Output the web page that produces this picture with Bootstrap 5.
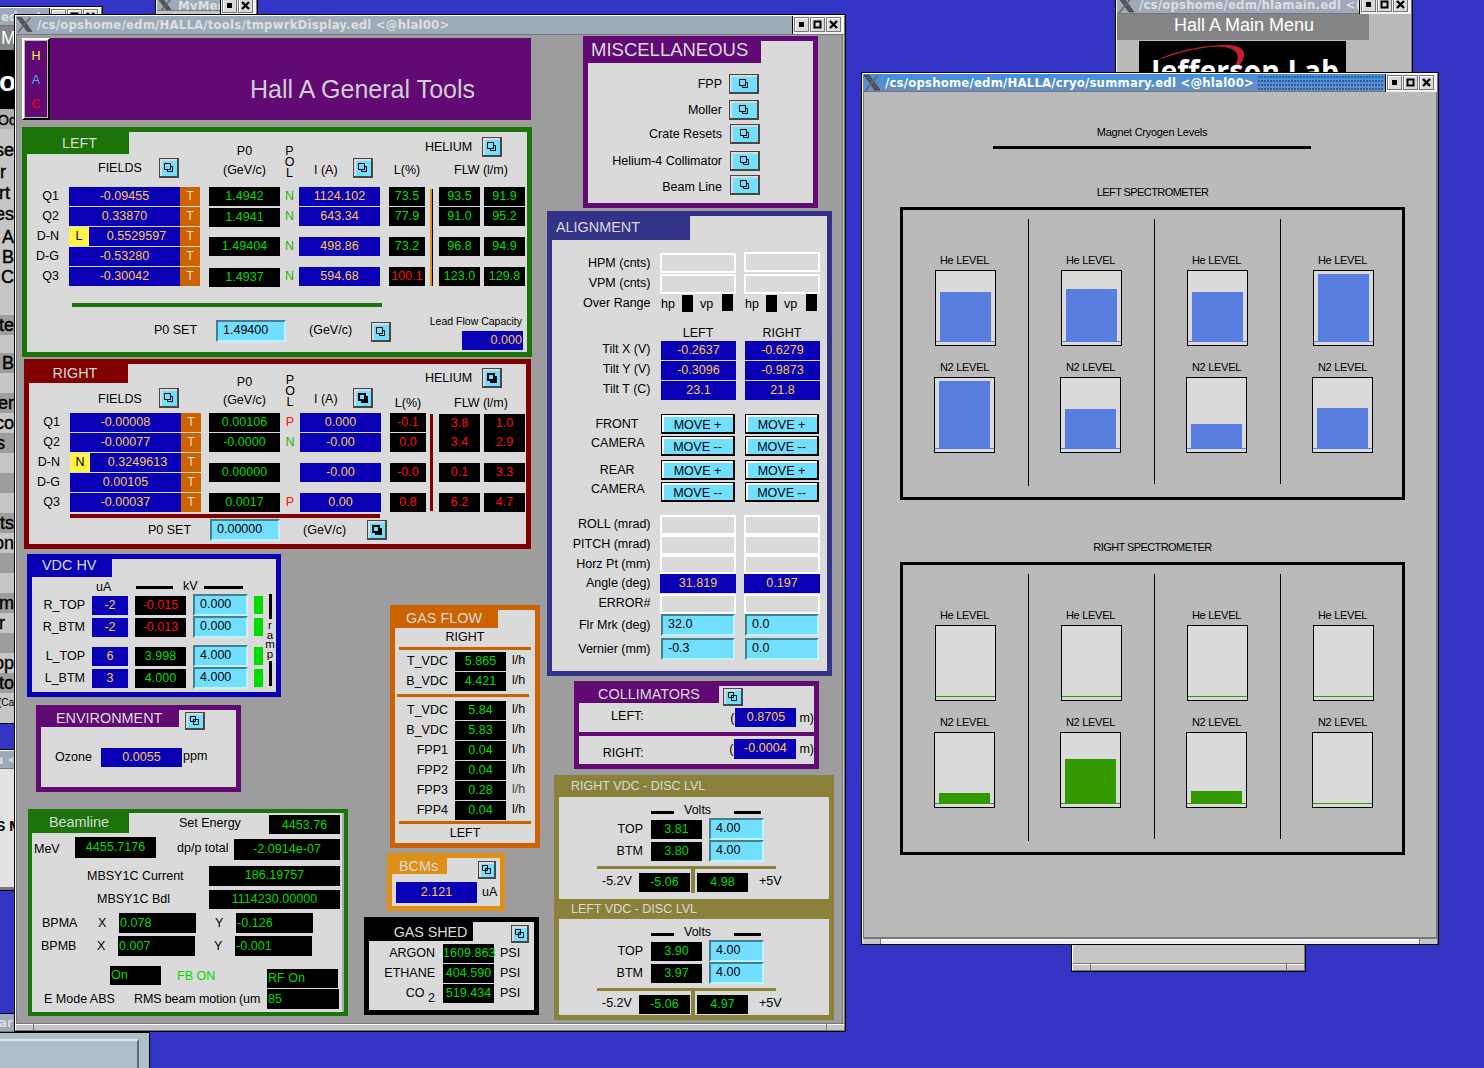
<!DOCTYPE html>
<html lang="en">
<head>
<meta charset="utf-8">
<title>Hall A General Tools</title>
<link rel="stylesheet" href="https://cdn.jsdelivr.net/npm/bootstrap@5.3.0/dist/css/bootstrap.min.css">
<script src="https://cdn.jsdelivr.net/npm/bootstrap@5.3.0/dist/js/bootstrap.bundle.min.js"></script>
<style>
body{background:#3333c4;color:#000;font:12.5px/20px "Liberation Sans",Arial,sans-serif;white-space:nowrap;width:1484px;height:1068px}
/* desktop windows */
.desk{width:1484px;height:1068px}
.win{position:absolute;background:#c6c6c6;border:1px solid #000;overflow:hidden}
.winframe{border:1px solid;border-color:#fff #777 #777 #fff;height:100%}
.tbar{height:18px;background:#9daaba;color:#dedede;font:bold 13px/17px "DejaVu Sans Condensed","DejaVu Sans",sans-serif;font-stretch:condensed;letter-spacing:.2px;border-bottom:1px solid #777;flex:none}
.tbar svg{flex:none}
.tbtns{background:#f2f2f2;height:18px;border-left:1px solid #000;padding:1px 3px 0 1px;gap:1px}
.tb{width:15px;height:15px;border:1px solid #777;background:#dadada;box-shadow:inset 1px 1px #fff;flex:none;display:block}
.handle{height:7px;border-top:1px solid #777;background:#c6c6c6;box-shadow:inset 0 1px #fff;flex:none}
.handle i{display:block;width:18px;height:7px}
.handle i:first-child{border-right:1px solid #777}.handle i:last-child{border-left:1px solid #777}
.w-sum .handle{background:#eee}.w-sum .handle i{background:#c6c6c6}
.w-main{left:14px;top:14px;width:832px;height:1018px}
.w-main .tbar{height:19px}
.w-main .surface{background:#9d9d9d;border:1px solid #777;border-width:0 1px 0 1px;margin:0 1px 0 0;height:988px}
.w-my{left:155px;top:-17px;width:103px;height:50px}
.w-left{left:-90px;top:6px;width:193px;height:718px}
.w-left2{left:-90px;top:749px;width:150px;height:142px}
.w-left3{left:-90px;top:1013px;width:150px;height:30px}
.w-low{left:-20px;top:1032px;width:170px;height:60px;background:#adc0c9}
.w-low .inset-box{margin:6px 10px 0 0;height:60px;border:2px solid;border-color:#dfe9ec #667 #667 #dfe9ec}
.w-hla{left:1115px;top:-6px;width:298px;height:90px}
.w-sum{left:861px;top:72px;width:578px;height:873px}
.w-bot{left:1071px;top:930px;width:235px;height:42px}
/* slivers of the menu behind */
.sliv{padding-left:80px;width:104px;font-size:18px;text-align:right;-webkit-text-stroke:.4px #000}
.sliv div{height:20px;line-height:20px}
.sliv .dk{background:#9d9d9d}
/* panels */
.pn{border:5px solid var(--c);background:#dadada;flex:none}
.tabt{background:var(--c);color:#dadada;font-size:14.4px;flex:none;overflow:visible}
.rd{height:19px;line-height:19px;margin-bottom:1px;text-align:center;flex:none;letter-spacing:.05px}
.bl{background:#0900b6;color:#ffc94a}
.bk{background:#000;color:#00dc00}
.rr{color:#ff0f0f}
.og{background:#cd6200;color:#e8d8c8}
.inp{background:#73dfff;border:2px solid;border-color:#437f8e #bdf2ff #bdf2ff #437f8e;height:22px;line-height:16px;padding-left:5px;flex:none}
.ib{width:20px;height:20px;background:#73dfff;border:1px solid #474747;border-right-width:2px;border-bottom-width:2px;box-shadow:inset 2px 2px #dadada;padding:0;flex:none;display:flex;align-items:center;justify-content:center}
.ib svg{display:block}
.ib.wide{width:30px}
.ib.s18{width:18px;height:18px}
.lb{flex:none}
.mid{margin:11px 0}
/* header */
.hdr{width:509px;height:82px;background:#610a73;margin:3px 0 7px 5px}
.hac{width:28px;height:82px;border:2px solid;border-color:#fff #000 #000 #fff;box-shadow:inset -1px -1px #bba,inset 1px 1px #bba;text-align:center;padding-top:3px}
.hdr-t{font-size:25px;color:#cfcfcf;margin:36px 0 0 200px;line-height:30px;letter-spacing:.02px}
/* spectrometer panels */
.p-left{--c:#1c730a;width:510px;height:230px;margin-left:5px}
.p-right{--c:#800000;width:507px;height:190px;margin:2px 0 5px 7px}
.cF{width:173px}.cF .fl{height:33px;padding:4px 0 0 71px}
.cF .fl .lb{width:61px}
.frow{display:flex;height:20px}
.frow .lb{width:32px;text-align:right;margin-right:10px;line-height:19px}
.p-right .frow .lb{width:31px}
.frow .bl{width:111px}.frow .og{width:20px}
.flag{background:#fff34a;color:#000;width:20px;height:19px;line-height:19px;text-align:center}
.frow .flag+.bl{width:91px;padding-left:4px}
.cP{width:71px;margin-left:9px;text-align:center}
.cO{width:20px;text-align:center}
.cO .pol{line-height:11px}
.pn-n{color:#20b800}
.cI{width:81px}
.cH{margin-left:8px}
.p-left .cO{width:19px}.p-left .cH{margin-left:9px}
.cL{width:36px;text-align:center}
.cB{width:3px;margin:2px 6px 0 5px;height:97px}
.cQ{width:41px;margin-right:4px}
.stem{height:4px;width:310px;background:var(--c)}
/* vdc hv */
.p-hv{--c:#0900b6;width:254px;height:143px;margin:0 0 8px 10px}
.hvrow{display:flex;height:22px}
.hvrow .lb{width:53px;text-align:right;margin-right:7px;line-height:22px}
.hvrow .rd{margin-top:2px}
.hvrow .bl{width:36px;margin-right:7px}.hvrow .bk{width:51px;margin-right:7px}
.hvrow .inp{width:55px;margin-right:6px}
.led{width:9px;height:18px;background:#00dc00;margin-top:2px}
.bar3{height:3px;background:#000}
.rampb{width:3px;height:25px;background:#000;margin:0 auto}
.ramp{width:12px;font-size:11.5px;line-height:9.6px;text-align:center}
/* environment, beamline */
.p-env{--c:#610a73;width:205px;height:87px;margin:0 0 17px 19px}
.p-bm{--c:#1c730a;width:320px;height:207px;border-width:4px;margin-left:11px;box-shadow:inset -2px 0 #aaa}
.bmr{display:flex}
.bmr .rd{margin:0;height:20px;line-height:20px}
.lt{text-align:left;padding-left:1px}
/* gas */
.p-gas{--c:#cd6200;width:150px;height:243px;margin-bottom:5px;margin-left:3px}
.grow{display:flex;height:20px}
.grow .lb{width:53px;text-align:right;margin-right:7px;line-height:19px}
.grow .bk{width:51px;margin-right:6px}
.grow .u{line-height:17px}
.grow.shed .lb{width:66px;margin-right:8px;line-height:18px}.grow.shed .u{line-height:18px}
.grow .lb .low2{vertical-align:-5px;line-height:1}
.gl{height:3px;width:132px;background:var(--c)}
.p-bcm{--c:#e08f16;width:118px;height:58px;margin-bottom:6px}
.p-shed{--c:#000;width:175px;height:98px;margin-left:-23px}
.colG{width:153px;margin:51px 0 0 39px}
/* right column */
.p-misc{--c:#610a73;width:235px;height:172px;margin:1px 0 3px 36px}
.mrow{display:flex}.mrow .lb{width:134px;text-align:right;margin-right:7px}
.p-al{--c:#333388;width:285px;height:465px;margin-bottom:5px}
.al-l{width:98.5px;text-align:right}
.al-c{width:76px;margin-left:8px}
.al-c .rd{margin-left:1px}
.ebox{height:20px;border:2px solid #fff}
.sq{width:11px;height:17px;background:#000}
.mv{display:block;width:74px;height:20px;margin-left:1px;padding:0;border:1px solid #000;border-width:1px 2px 2px 1px;background:#73dfff;box-shadow:inset 2px 2px #fff;text-align:center;line-height:20px;font-size:12.5px;margin-bottom:2px}
.al-c .inp{width:74px;margin-left:1px}
.p-col{--c:#610a73;width:245px;height:88px;margin:0 0 6px 27px}
.p-disc{--c:#8a823a;width:280px;height:245px;margin-left:7px;background:var(--c);border:0;padding:0 5px}
.dt{color:#dadada;line-height:20px;padding-left:12px}
.dbody{background:#dadada}
.drow{display:flex;height:22px}
.drow .lb{width:84px;text-align:right;margin-right:8px;line-height:22px}
.drow .bk{width:51px;margin:2px 7px 0 0}.drow .inp{width:55px}
.olive{height:3px;width:179px;background:var(--c);margin:4px 0 0 38px}
/* cryo summary */
.cryo{background:#bababa;font-size:11px;letter-spacing:-.28px;height:846px;border:1px solid #777;border-top:0}
.spt{letter-spacing:-.58px}
.spec{width:505px;height:293px;border:3px solid #000;margin-left:36px}
.quad{width:125px;padding:40px 0 0 31px;flex:none}
.vline{width:1px;height:265px;background:#000;margin-top:9px;flex:none}
.tank{width:61px;height:76px;border:1px solid #000;background:#dadada;padding-bottom:3px;display:flex;flex-direction:column;justify-content:flex-end}
.tank.he{margin:0 0 11px 1px}
.tank .lv{width:51px;background:var(--f);margin:0 auto}
.tank .base{height:1px;background:var(--f)}
.tl{line-height:20px;height:20px;text-align:center;width:61px}
.s-blue{--f:#597ee0}.s-green{--f:#339900}
</style>
</head>
<body>
<svg width="0" height="0" class="position-absolute">
<symbol id="xl" viewBox="0 0 18 18"><path d="M1 1h5l11 15h-5z" fill="#555" stroke="#333" stroke-width=".6"/><path d="M15 1 2 17" stroke="#666" stroke-width="1.6"/></symbol>
<symbol id="ov" viewBox="0 0 10 10"><path d="M3.5 3.5h5v5h-5z" fill="none" stroke="#000"/><path d="M.5.5h6v6h-6z" fill="#73dfff" stroke="#000"/></symbol>
<symbol id="ox" viewBox="0 0 10 10"><path d="M3.5 3.5h5v5h-5z" fill="none" stroke="#000"/><path d="M.5.5h5v5h-5z" fill="none" stroke="#000"/></symbol>
<symbol id="of" viewBox="0 0 10 10"><path d="M3 3h7v7h-7z" fill="#000"/><path d="M1 1h6v6h-6z" fill="#73dfff" stroke="#000" stroke-width="2"/></symbol>
<symbol id="bd" viewBox="0 0 13 13"><path d="M4 4h5v5h-5z"/></symbol>
<symbol id="bq" viewBox="0 0 13 13"><path d="M3.5 3.5h6v6h-6z" fill="none" stroke="#000" stroke-width="2"/></symbol>
<symbol id="bx" viewBox="0 0 13 13"><path d="M3 3l7 7M10 3l-7 7" stroke="#000" stroke-width="2.4"/></symbol>
</svg>
<div class="desk position-relative overflow-hidden">

<!-- menu windows behind -->
<div class="win w-left"><div class="winframe">
 <div class="tbar d-flex justify-content-between"><span style="padding-left:89px">edm_t</span><span class="tbtns d-flex"><svg class="tb"><use href="#bd"/></svg><svg class="tb"><use href="#bq"/></svg><svg class="tb"><use href="#bx"/></svg></span></div>
 <div class="sliv">
  <div class="text-white" style="height:24px;line-height:24px;background:#858585;-webkit-text-stroke:0">M</div>
  <div class="text-white fw-bold fs-3" style="height:59px;line-height:64px;background:#000;-webkit-text-stroke:0">o</div>
  <div style="background:#b0b0b0;font-size:14px;line-height:22px">Oc</div>
 </div>
</div></div>
<div class="win" style="left:-90px;top:132px;width:104px;height:591px;border:0"><div class="sliv">
 <div style="height:8px"></div><div style="height:22px">se</div><div style="height:21px;padding-right:8px">r</div><div style="height:21px;padding-right:4px">rt</div><div style="height:23px">es</div>
 <div>A</div><div>B</div><div>C</div><div style="height:28px"></div>
 <div class="dk">te</div><div style="height:18px"></div><div class="dk">B</div><div></div><div class="dk">er</div><div>co</div><div class="dk" style="padding-right:9px">s</div><div></div><div class="dk"></div><div></div>
 <div class="dk">ts</div><div>on</div><div class="dk"></div><div></div><div class="dk">m</div><div style="padding-right:9px">r</div><div class="dk"></div><div>op</div><div class="dk">to</div>
 <div style="font-size:10px;-webkit-text-stroke:0">(Ca</div>
</div></div>
<div class="win w-left2"><div class="winframe" style="background:#e2e2e2"><div class="tbar" style="padding-left:83px">u &lt;</div><div style="padding:47px 0 0 84px;font-size:14px" class="fw-bold">S M</div><div style="height:53px;border-bottom:2px solid #777"></div></div></div>
<div class="win w-left3"><div class="tbar" style="padding-left:88px">ar</div></div>
<div class="win w-low"><div class="inset-box"></div></div>
<div class="win w-my"><div class="winframe"><div class="tbar d-flex justify-content-between mt-2 pt-1"><span class="d-flex overflow-hidden"><svg width="17" height="18"><use href="#xl"/></svg><span class="ps-1">MyMer</span></span><span class="tbtns d-flex"><svg class="tb"><use href="#bd"/></svg><svg class="tb"><use href="#bx"/></svg></span></div></div></div>

<div class="win w-hla"><div class="winframe" style="background:#bababa">
 <div class="tbar d-flex justify-content-between"><span class="d-flex overflow-hidden"><svg width="18" height="18"><use href="#xl"/></svg><span class="ps-1">/cs/opshome/edm/hlamain.edl &lt;(</span></span><span class="tbtns d-flex"><svg class="tb"><use href="#bd"/></svg><svg class="tb"><use href="#bq"/></svg><svg class="tb"><use href="#bx"/></svg></span></div>
 <div class="text-white text-center" style="width:252px;height:26px;background:#858585;font-size:18px;line-height:22px;padding-left:2px">Hall A Main Menu</div>
 <svg width="207" height="45" style="display:block;margin:1px 0 0 22px;background:#000"><path d="M18 19C40 8 70 4 88 4c24 0 20 16 5 28l-8 5c14-12 22-28 0-31-20-2-45 6-67 13z" fill="#c0202e"/><text x="12" y="41" fill="#fff" font-family="Open Sans,Noto Sans,sans-serif" font-size="30" font-weight="700" textLength="188" lengthAdjust="spacingAndGlyphs">Jefferson Lab</text></svg>
</div></div>
<div class="win w-bot"><div class="winframe d-flex flex-column justify-content-end"><div class="handle d-flex justify-content-between"><i></i><i></i></div></div></div>

<!-- general tools -->
<div class="win w-main"><div class="winframe">
<div class="tbar d-flex justify-content-between"><span class="d-flex"><svg width="17" height="18"><use href="#xl"/></svg><span class="ps-1">/cs/opshome/edm/HALLA/tools/tmpwrkDisplay.edl &lt;@hlal00&gt;</span></span><span class="tbtns d-flex"><svg class="tb"><use href="#bd"/></svg><svg class="tb"><use href="#bq"/></svg><svg class="tb"><use href="#bx"/></svg></span></div>
<div class="surface d-flex">
<div style="width:530px">
 <div class="hdr d-flex"><div class="hac"><div style="color:#fff34a;line-height:27px">H</div><div style="color:#4fa8ff;line-height:21px">A</div><div style="color:#f00;line-height:27px">C</div></div><div class="hdr-t">Hall A General Tools</div></div>

 <div class="pn p-left">
  <div class="d-flex">
   <div class="cF"><div class="tabt text-center" style="width:102px;height:22px;line-height:22px;padding-left:3px">LEFT</div>
    <div class="fl d-flex"><span class="lb">FIELDS</span><span class="ib"><svg width="10" height="10"><use href="#ov"/></svg></span></div>
    <div class="frow"><span class="lb">Q1</span><span class="rd bl">-0.09455</span><span class="rd og">T</span></div>
    <div class="frow"><span class="lb">Q2</span><span class="rd bl">0.33870</span><span class="rd og">T</span></div>
    <div class="frow"><span class="lb">D-N</span><span class="flag">L</span><span class="rd bl text-center">0.5529597</span><span class="rd og">T</span></div>
    <div class="frow"><span class="lb">D-G</span><span class="rd bl">-0.53280</span><span class="rd og">T</span></div>
    <div class="frow"><span class="lb">Q3</span><span class="rd bl">-0.30042</span><span class="rd og">T</span></div>
   </div>
   <div class="cP"><div style="padding-top:10px;line-height:19px;height:55px">P0<br>(GeV/c)</div><div class="rd bk" style="margin-bottom:2px">1.4942</div><div class="rd bk" style="margin-bottom:10px">1.4941</div><div class="rd bk" style="margin-bottom:12px">1.49404</div><div class="rd bk">1.4937</div></div>
   <div class="cO"><div class="pol" style="padding-top:14px;height:55px">P<br>O<br>L</div><div class="rd pn-n">N</div><div class="rd pn-n">N</div><div class="rd pn-n mid">N</div><div class="rd pn-n">N</div></div>
   <div class="cI"><div class="d-flex" style="height:55px;padding:26px 0 0 15px"><span style="width:39px;line-height:24px">I (A)</span><span class="ib"><svg width="10" height="10"><use href="#ov"/></svg></span></div><div class="rd bl">1124.102</div><div class="rd bl">643.34</div><div class="rd bl mid">498.86</div><div class="rd bl">594.68</div></div>
   <div class="cH">
    <div class="d-flex" style="padding:5px 0 0 36px;height:27px"><span style="width:57px">HELIUM</span><span class="ib"><svg width="10" height="10"><use href="#ov"/></svg></span></div>
    <div class="d-flex" style="height:28px;line-height:22px"><span class="cL">L(%)</span><span style="padding-left:29px">FLW (l/m)</span></div>
    <div class="d-flex"><div class="cL"><div class="rd bk">73.5</div><div class="rd bk">77.9</div><div class="rd bk mid">73.2</div><div class="rd bk rr">100.1</div></div>
     <div class="cB" style="background:#e08f16;border-right:1px solid #000"></div>
     <div class="cQ"><div class="rd bk">93.5</div><div class="rd bk">91.0</div><div class="rd bk mid">96.8</div><div class="rd bk">123.0</div></div>
     <div class="cQ me-0"><div class="rd bk">91.9</div><div class="rd bk">95.2</div><div class="rd bk mid">94.9</div><div class="rd bk">129.8</div></div></div>
   </div>
  </div>
  <div class="stem" style="margin:15px 0 0 45px"></div>
  <div class="d-flex" style="padding-top:1px"><span style="width:62px;margin:12px 0 0 127px">P0 SET</span><span class="inp" style="width:70px;margin:12px 23px 0 0">1.49400</span><span style="width:62px;margin-top:12px">(GeV/c)</span><span class="ib" style="margin-top:14px"><svg width="10" height="10"><use href="#ov"/></svg></span>
   <div class="text-end" style="width:132px;padding-top:4px"><div style="font-size:10.5px;line-height:19px;padding-right:1px">Lead Flow Capacity</div><div class="rd bl text-end ms-auto" style="width:61px;padding-right:1px">0.000</div></div></div>
 </div>

 <div class="pn p-right">
  <div class="d-flex" style="height:149px">
   <div class="cF" style="width:172px"><div class="tabt text-center" style="width:99px;height:19px;line-height:19px;padding-right:7px">RIGHT</div>
    <div class="fl d-flex" style="height:30px;padding:5px 0 0 69px"><span class="lb" style="line-height:23px">FIELDS</span><span class="ib"><svg width="10" height="10"><use href="#ov"/></svg></span></div>
    <div class="frow"><span class="lb">Q1</span><span class="rd bl">-0.00008</span><span class="rd og">T</span></div>
    <div class="frow"><span class="lb">Q2</span><span class="rd bl">-0.00077</span><span class="rd og">T</span></div>
    <div class="frow"><span class="lb">D-N</span><span class="flag">N</span><span class="rd bl">0.3249613</span><span class="rd og">T</span></div>
    <div class="frow"><span class="lb">D-G</span><span class="rd bl">0.00105</span><span class="rd og">T</span></div>
    <div class="frow"><span class="lb">Q3</span><span class="rd bl">-0.00037</span><span class="rd og">T</span></div>
   </div>
   <div class="cP" style="margin-left:8px"><div style="padding-top:9px;line-height:18px;height:49px">P0<br>(GeV/c)</div><div class="rd bk">0.00106</div><div class="rd bk">-0.0000</div><div class="rd bk mid">0.00000</div><div class="rd bk">0.0017</div></div>
   <div class="cO"><div class="pol" style="padding-top:11px;height:49px">P<br>O<br>L</div><div class="rd rr">P</div><div class="rd pn-n">N</div><div class="rd mid"></div><div class="rd rr">P</div></div>
   <div class="cI"><div class="d-flex" style="height:49px;padding:24px 0 0 14px"><span style="width:39px;line-height:23px">I (A)</span><span class="ib"><svg width="10" height="10"><use href="#of"/></svg></span></div><div class="rd bl">0.000</div><div class="rd bl">-0.00</div><div class="rd bl mid">-0.00</div><div class="rd bl">0.00</div></div>
   <div class="cH" style="margin-left:9px">
    <div class="d-flex" style="padding:4px 0 0 35px;height:28px"><span style="width:57px">HELIUM</span><span class="ib"><svg width="10" height="10"><use href="#of"/></svg></span></div>
    <div class="d-flex" style="height:21px;line-height:22px"><span class="cL">L(%)</span><span style="padding-left:28px">FLW (l/m)</span></div>
    <div class="d-flex"><div class="cL"><div class="rd bk rr">-0.1</div><div class="rd bk rr">0.0</div><div class="rd bk rr mid">-0.0</div><div class="rd bk rr">0.8</div></div>
     <div class="cB" style="background:#800000;margin:1px 6px 0 4px"></div>
     <div class="cQ"><div class="rd bk rr mb-0" style="margin-top:1px">3.8</div><div class="rd bk rr mb-0">3.4</div><div class="rd bk rr mid">0.1</div><div class="rd bk rr">6.2</div></div>
     <div class="cQ me-0"><div class="rd bk rr mb-0" style="margin-top:1px">1.0</div><div class="rd bk rr mb-0">2.9</div><div class="rd bk rr mid">3.3</div><div class="rd bk rr">4.7</div></div></div>
   </div>
  </div>
  <div class="stem" style="margin:1px 0 0 41px"></div>
  <div class="d-flex"><span style="width:62px;margin:2px 0 0 119px">P0 SET</span><span class="inp" style="width:70px;margin:1px 23px 0 0">0.00000</span><span style="width:64px;margin-top:2px">(GeV/c)</span><span class="ib" style="margin-top:2px"><svg width="10" height="10"><use href="#of"/></svg></span></div>
 </div>

 <div class="d-flex">
  <div style="width:331px">
   <div class="pn p-hv d-flex">
    <div style="width:231px">
     <div class="tabt" style="width:80px;height:18px;line-height:13px;padding-left:10px">VDC HV</div>
     <div class="d-flex" style="height:17px"><span style="width:40px;margin-left:64px;line-height:21px">uA</span><span class="bar3" style="width:37px;margin:9px 10px 0 0"></span><span style="width:21px;line-height:19px">kV</span><span class="bar3" style="width:39px;margin-top:9px"></span></div>
     <div class="hvrow"><span class="lb">R_TOP</span><span class="rd bl">-2</span><span class="rd bk rr">-0.015</span><span class="inp">0.000</span><span class="led"></span></div>
     <div class="hvrow"><span class="lb">R_BTM</span><span class="rd bl">-2</span><span class="rd bk rr">-0.013</span><span class="inp">0.000</span><span class="led"></span></div>
     <div class="hvrow" style="margin-top:7px"><span class="lb">L_TOP</span><span class="rd bl">6</span><span class="rd bk">3.998</span><span class="inp">4.000</span><span class="led"></span></div>
     <div class="hvrow"><span class="lb">L_BTM</span><span class="rd bl">3</span><span class="rd bk">4.000</span><span class="inp">4.000</span><span class="led"></span></div>
    </div>
    <div class="ramp" style="margin-left:1px;padding-top:35px"><div class="rampb"></div><div style="padding:2px 0 2px">r<br>a<br>m<br>p</div><div class="rampb"></div></div>
   </div>
   <div class="pn p-env">
    <div class="d-flex"><div class="tabt" style="width:138px;height:17px;line-height:16px;padding-left:15px">ENVIRONMENT</div><span class="ib s18" style="width:20px;margin:2px 0 -4px 6px"><svg width="10" height="10"><use href="#ox"/></svg></span></div>
    <div class="d-flex" style="padding:21px 0 0 14px"><span style="width:46px;line-height:19px">Ozone</span><span class="rd bl" style="width:81px">0.0055</span><span style="padding-left:1px;line-height:17px">ppm</span></div>
   </div>
   <div class="pn p-bm">
    <div class="bmr"><div class="tabt text-center" style="width:97px;height:20px;line-height:19px;padding-right:3px">Beamline</div><span style="width:90px;margin-left:50px">Set Energy</span><span class="rd bk" style="width:71px;height:19px;margin-top:2px">4453.76</span></div>
    <div class="bmr" style="padding:3px 0 0 2px"><span style="width:41px;line-height:25px">MeV</span><span class="rd bk" style="width:81px;height:21px;margin-right:21px">4455.7176</span><span style="width:57px;line-height:23px">dp/p total</span><span class="rd bk" style="width:106px;height:21px;margin-top:2px">-2.0914e-07</span></div>
    <div class="bmr" style="padding:4px 0 0 55px"><span style="width:122px">MBSY1C Current</span><span class="rd bk" style="width:131px;line-height:18px">186.19757</span></div>
    <div class="bmr" style="padding:4px 0 0 65px"><span style="width:112px;line-height:18px">MBSY1C Bdl</span><span class="rd bk" style="width:131px;height:19px;line-height:18px">1114230.00000</span></div>
    <div class="bmr" style="padding:4px 0 0 10px"><span style="width:56px">BPMA</span><span style="width:21px">X</span><span class="rd bk lt" style="width:77px;margin-right:19px">0.078</span><span style="width:21px">Y</span><span class="rd bk lt" style="width:77px">-0.126</span></div>
    <div class="bmr" style="padding:3px 0 0 9px"><span style="width:56px">BPMB</span><span style="width:21px">X</span><span class="rd bk lt" style="width:77px;margin-right:19px">0.007</span><span style="width:21px">Y</span><span class="rd bk lt" style="width:77px">-0.001</span></div>
    <div class="bmr" style="padding:10px 0 0 78px"><span class="rd bk lt" style="width:51px;height:19px;line-height:18px;margin-right:16px">On</span><span style="width:90px;color:#00dc00">FB ON</span><span class="rd bk lt" style="width:71px;height:19px;line-height:19px;margin-top:3px">RF On</span></div>
    <div class="bmr" style="padding:1px 0 0 12px"><span style="width:90px">E Mode ABS</span><span style="width:133px;line-height:21px;letter-spacing:-.12px">RMS beam motion (um</span><span class="rd bk lt" style="width:72px">85</span></div>
   </div>
  </div>
  <div class="colG">
   <div class="pn p-gas">
    <div class="tabt" style="width:103px;height:18px;line-height:17px;padding-left:11px">GAS FLOW</div>
    <div class="text-center" style="height:19px;line-height:19px">RIGHT</div>
    <div class="gl" style="margin:0 0 2px 4px"></div>
    <div class="grow"><span class="lb">T_VDC</span><span class="rd bk">5.865</span><span class="u">l/h</span></div>
    <div class="grow"><span class="lb">B_VDC</span><span class="rd bk">4.421</span><span class="u">l/h</span></div>
    <div class="gl" style="margin:2px 0 4px 2px"></div>
    <div class="grow"><span class="lb">T_VDC</span><span class="rd bk">5.84</span><span class="u">l/h</span></div>
    <div class="grow"><span class="lb">B_VDC</span><span class="rd bk">5.83</span><span class="u">l/h</span></div>
    <div class="grow"><span class="lb">FPP1</span><span class="rd bk">0.04</span><span class="u">l/h</span></div>
    <div class="grow"><span class="lb">FPP2</span><span class="rd bk">0.04</span><span class="u">l/h</span></div>
    <div class="grow"><span class="lb">FPP3</span><span class="rd bk">0.28</span><span class="u" style="color:#444">l/h</span></div>
    <div class="grow"><span class="lb">FPP4</span><span class="rd bk">0.04</span><span class="u">l/h</span></div>
    <div class="gl ms-1"></div>
    <div class="text-center" style="line-height:18px">LEFT</div>
   </div>
   <div class="pn p-bcm">
    <div class="d-flex" style="height:24px"><div class="tabt" style="width:55px;height:16px;line-height:16px;padding-left:7px">BCMs</div><span class="ib s18" style="margin:3px 0 0 31px"><svg width="10" height="10"><use href="#ox"/></svg></span></div>
    <div class="d-flex ps-1"><span class="rd bl" style="width:81px;height:21px;line-height:20px">2.121</span><span style="padding-left:5px">uA</span></div>
   </div>
   <div class="pn p-shed">
    <div class="d-flex" style="height:22px"><div class="tabt text-center" style="width:104px;height:19px;line-height:20px;padding-left:19px;letter-spacing:-.1px">GAS SHED</div><span class="ib s18" style="margin:3px 0 0 38px"><svg width="10" height="10"><use href="#ox"/></svg></span></div>
    <div class="grow shed"><span class="lb">ARGON</span><span class="rd bk">1609.863</span><span class="u">PSI</span></div>
    <div class="grow shed"><span class="lb">ETHANE</span><span class="rd bk">404.590</span><span class="u">PSI</span></div>
    <div class="grow shed"><span class="lb">CO <span class="low2">2</span></span><span class="rd bk">519.434</span><span class="u">PSI</span></div>
   </div>
  </div>
 </div>
</div>

<div>
 <div class="pn p-misc">
  <div class="tabt" style="width:173px;height:22px;line-height:17px;font-size:18.5px;padding-left:3px">MISCELLANEOUS</div>
  <div class="mrow" style="margin-top:11px"><span class="lb">FPP</span><span class="ib wide"><svg width="10" height="10"><use href="#ov"/></svg></span></div>
  <div class="mrow" style="margin-top:6px"><span class="lb">Moller</span><span class="ib wide"><svg width="10" height="10"><use href="#ov"/></svg></span></div>
  <div class="mrow" style="margin-top:4px"><span class="lb me-2">Crate Resets</span><span class="ib wide"><svg width="10" height="10"><use href="#ov"/></svg></span></div>
  <div class="mrow" style="margin-top:7px"><span class="lb me-2">Helium-4 Collimator</span><span class="ib wide"><svg width="10" height="10"><use href="#ov"/></svg></span></div>
  <div class="mrow" style="margin-top:4px"><span class="lb me-2" style="line-height:25px">Beam Line</span><span class="ib wide"><svg width="10" height="10"><use href="#ov"/></svg></span></div>
 </div>

 <div class="pn p-al">
  <div class="tabt" style="width:138px;height:24px;line-height:22px;padding-left:4px">ALIGNMENT</div>
  <div class="d-flex" style="padding-top:13px">
   <div class="al-l"><div>HPM (cnts)</div><div>VPM (cnts)</div><div>Over Range</div><div style="height:26px"></div><div>Tilt X (V)</div><div>Tilt Y (V)</div><div>Tilt T (C)</div>
    <div style="padding:15px 12px 0 0">FRONT</div><div style="line-height:19px;padding-right:6px">CAMERA</div><div style="padding:7px 16px 0 0">REAR</div><div style="line-height:19px;padding-right:6px">CAMERA</div>
    <div style="padding-top:15px">ROLL (mrad)</div><div>PITCH (mrad)</div><div>Horz Pt (mm)</div><div style="line-height:19px">Angle (deg)</div><div>ERROR#</div><div style="padding-top:2px">Flr Mrk (deg)</div><div style="padding-top:4px">Vernier (mm)</div></div>
   <div class="al-c" style="margin-left:9.5px"><div class="ebox"></div><div class="ebox" style="margin-top:1px"></div>
    <div class="d-flex" style="height:38px"><span style="width:22px;padding-left:1px">hp</span><span class="sq" style="margin-top:1px"></span><span style="width:22px;margin-left:7px">vp</span><span class="sq"></span></div>
    <div class="text-center" style="line-height:21px;margin-top:-9px;height:18px">LEFT</div>
    <div class="rd bl">-0.2637</div><div class="rd bl">-0.3096</div><div class="rd bl" style="margin-bottom:14px">23.1</div>
    <button class="mv">MOVE +</button><button class="mv" style="margin-bottom:4px">MOVE --</button><button class="mv">MOVE +</button><button class="mv" style="margin-bottom:13px">MOVE --</button>
    <div class="ebox"></div><div class="ebox"></div><div class="ebox" style="height:19px"></div><div class="rd bl ms-0">31.819</div><div class="ebox"></div>
    <div class="inp">32.0</div><div class="inp" style="margin-top:2px">-0.3</div></div>
   <div class="al-c"><div class="ebox" style="margin-top:-1px"></div><div class="ebox" style="margin-top:2px"></div>
    <div class="d-flex" style="height:38px"><span style="width:22px;padding-left:1px">hp</span><span class="sq" style="margin-top:1px"></span><span style="width:22px;margin-left:7px">vp</span><span class="sq"></span></div>
    <div class="text-center" style="line-height:21px;margin-top:-9px;height:18px">RIGHT</div>
    <div class="rd bl">-0.6279</div><div class="rd bl">-0.9873</div><div class="rd bl" style="margin-bottom:14px">21.8</div>
    <button class="mv">MOVE +</button><button class="mv" style="margin-bottom:4px">MOVE --</button><button class="mv">MOVE +</button><button class="mv" style="margin-bottom:13px">MOVE --</button>
    <div class="ebox"></div><div class="ebox"></div><div class="ebox" style="height:19px"></div><div class="rd bl ms-0">0.197</div><div class="ebox"></div>
    <div class="inp">0.0</div><div class="inp" style="margin-top:2px">0.0</div></div>
  </div>
 </div>

 <div class="pn p-col">
  <div class="d-flex" style="height:22px"><div class="tabt text-center" style="width:140px;height:17px;line-height:16px">COLLIMATORS</div><span class="ib s18" style="width:20px;margin:2px 0 0 4px"><svg width="10" height="10"><use href="#ox"/></svg></span></div>
  <div class="d-flex" style="height:24px"><span class="text-end" style="width:65px;line-height:17px">LEFT:</span><span class="text-end" style="width:92px;padding-right:1px">(</span><span class="rd bl" style="width:61px">0.8705</span><span style="padding-left:3px">m)</span></div>
  <div style="height:4px;background:var(--c)"></div>
  <div class="d-flex" style="padding-top:3px"><span class="text-end" style="width:65px;line-height:28px">RIGHT:</span><span class="text-end" style="width:91px;padding-right:1px">(</span><span class="rd bl" style="width:62px;height:20px">-0.0004</span><span style="padding-left:3px">m)</span></div>
 </div>

 <div class="pn p-disc">
  <div class="dt" style="height:22px;line-height:23px">RIGHT VDC - DISC LVL</div>
  <div class="dbody" style="height:102px">
   <div class="d-flex" style="height:21px;padding-left:92px"><span class="bar3" style="width:23px;margin:14px 10px 0 0"></span><span style="width:50px;line-height:26px">Volts</span><span class="bar3" style="width:27px;margin-top:14px"></span></div>
   <div class="drow"><span class="lb">TOP</span><span class="rd bk">3.81</span><span class="inp">4.00</span></div>
   <div class="drow"><span class="lb">BTM</span><span class="rd bk">3.80</span><span class="inp">4.00</span></div>
   <div class="olive"></div>
   <div class="d-flex" style="height:24px;padding-left:43px"><span style="width:37px;line-height:25px">-5.2V</span><span class="rd bk" style="width:51px;margin-top:4px">-5.06</span><span style="width:4px;background:#8a823a;margin:0 2px 0 1px"></span><span class="rd bk" style="width:51px;margin-top:4px">4.98</span><span style="padding-left:11px;line-height:25px">+5V</span></div>
  </div>
  <div class="dt" style="line-height:21px;height:20px">LEFT VDC - DISC LVL</div>
  <div class="dbody" style="height:96px">
   <div class="d-flex" style="height:21px;padding-left:92px"><span class="bar3" style="width:23px;margin:14px 10px 0 0"></span><span style="width:50px;line-height:26px">Volts</span><span class="bar3" style="width:27px;margin-top:14px"></span></div>
   <div class="drow"><span class="lb">TOP</span><span class="rd bk">3.90</span><span class="inp">4.00</span></div>
   <div class="drow"><span class="lb">BTM</span><span class="rd bk">3.97</span><span class="inp">4.00</span></div>
   <div class="olive"></div>
   <div class="d-flex" style="height:24px;padding-left:43px"><span style="width:37px;line-height:25px">-5.2V</span><span class="rd bk" style="width:51px;margin-top:4px">-5.06</span><span style="width:4px;background:#8a823a;margin:0 2px 0 1px"></span><span class="rd bk" style="width:51px;margin-top:4px">4.97</span><span style="padding-left:11px;line-height:25px">+5V</span></div>
  </div>
 </div>
</div>
</div>
<div class="handle d-flex justify-content-between"><i></i><i></i></div>
</div></div>

<!-- cryo summary -->
<div class="win w-sum"><div class="winframe">
<div class="tbar d-flex text-white" style="background:linear-gradient(#3f8fe0,#6a8fbd)"><svg width="18" height="18"><use href="#xl"/></svg><span class="ps-1">/cs/opshome/edm/HALLA/cryo/summary.edl &lt;@hlal00&gt;</span><span class="flex-grow-1" style="margin:2px 1px 1px 4px;background:radial-gradient(circle at 1px 1px,#2b5fa5 .8px,transparent 1px) 0 0/3px 4px"></span><span class="tbtns d-flex"><svg class="tb"><use href="#bd"/></svg><svg class="tb"><use href="#bq"/></svg><svg class="tb"><use href="#bx"/></svg></span></div>
<div class="cryo">
 <div class="text-center" style="width:576px;padding-top:30px">Magnet Cryogen Levels</div>
 <div class="bar3" style="width:318px;margin:4px 0 33px 129px"></div>
 <div class="text-center spt" style="width:577px;height:25px">LEFT SPECTROMETER</div>
 <div class="spec s-blue d-flex">
  <div class="quad"><div class="tl">He LEVEL</div><div class="tank he"><div class="lv" style="height:49px"></div><div class="base"></div></div><div class="tl">N2 LEVEL</div><div class="tank"><div class="lv" style="height:67px"></div><div class="base"></div></div></div>
  <div class="vline" style="height:267px"></div>
  <div class="quad"><div class="tl">He LEVEL</div><div class="tank he"><div class="lv" style="height:52px"></div><div class="base"></div></div><div class="tl">N2 LEVEL</div><div class="tank"><div class="lv" style="height:39px"></div><div class="base"></div></div></div>
  <div class="vline"></div>
  <div class="quad"><div class="tl">He LEVEL</div><div class="tank he"><div class="lv" style="height:49px"></div><div class="base"></div></div><div class="tl">N2 LEVEL</div><div class="tank"><div class="lv" style="height:24px"></div><div class="base"></div></div></div>
  <div class="vline"></div>
  <div class="quad" style="width:121px"><div class="tl">He LEVEL</div><div class="tank he"><div class="lv" style="height:67px"></div><div class="base"></div></div><div class="tl">N2 LEVEL</div><div class="tank"><div class="lv" style="height:40px"></div><div class="base"></div></div></div>
 </div>
 <div class="text-center spt" style="width:577px;height:62px;padding-top:37px">RIGHT SPECTROMETER</div>
 <div class="spec s-green d-flex">
  <div class="quad"><div class="tl">He LEVEL</div><div class="tank he"><div class="base"></div></div><div class="tl">N2 LEVEL</div><div class="tank"><div class="lv" style="height:10px"></div><div class="base"></div></div></div>
  <div class="vline" style="height:267px"></div>
  <div class="quad"><div class="tl">He LEVEL</div><div class="tank he"><div class="base"></div></div><div class="tl">N2 LEVEL</div><div class="tank"><div class="lv" style="height:44px"></div><div class="base"></div></div></div>
  <div class="vline"></div>
  <div class="quad"><div class="tl">He LEVEL</div><div class="tank he"><div class="base"></div></div><div class="tl">N2 LEVEL</div><div class="tank"><div class="lv" style="height:12px"></div><div class="base"></div></div></div>
  <div class="vline"></div>
  <div class="quad" style="width:121px"><div class="tl">He LEVEL</div><div class="tank he"><div class="base"></div></div><div class="tl">N2 LEVEL</div><div class="tank"><div class="base"></div></div></div>
 </div>
</div>
<div class="handle d-flex justify-content-between"><i></i><i></i></div>
</div></div>
</div>
</body>
</html>
